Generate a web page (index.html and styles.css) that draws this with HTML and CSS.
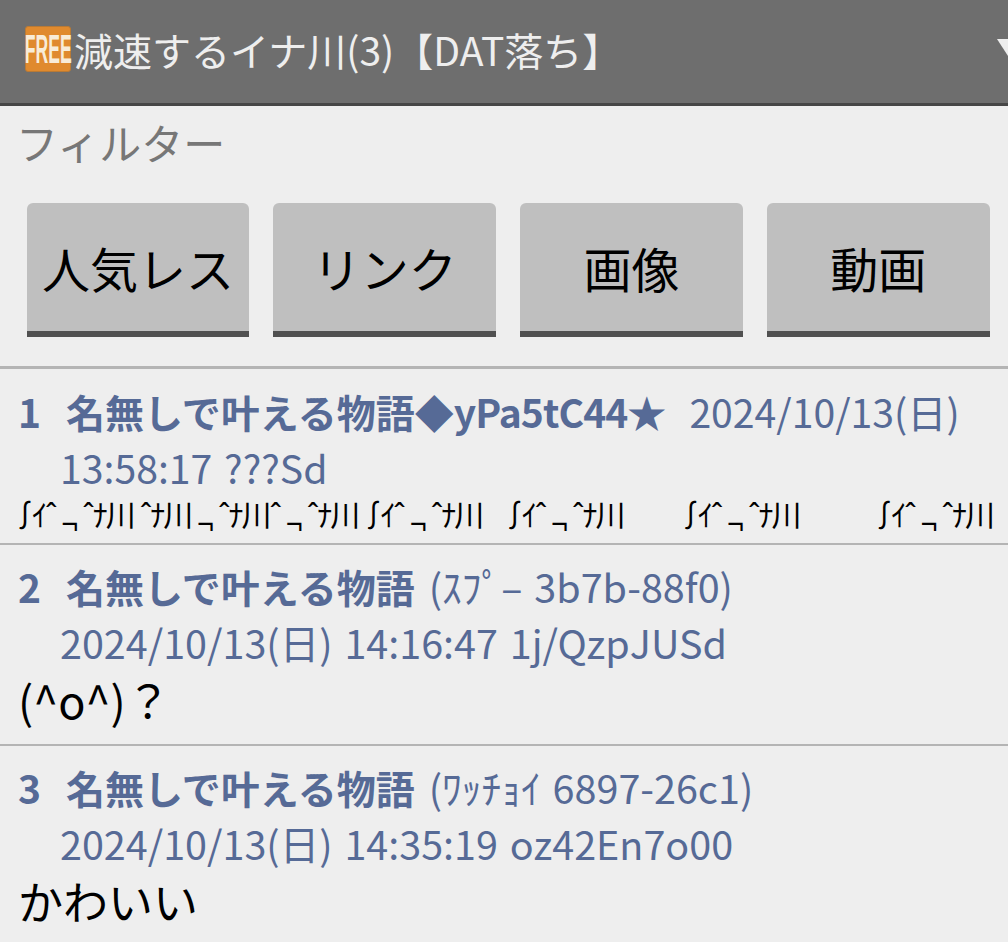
FILE: index.html
```html
<!DOCTYPE html>
<html lang="ja">
<head>
  <meta charset="UTF-8">
  <meta name="viewport" content="width=device-width, initial-scale=1.0">
  <title>減速するイナ川(3)</title>
  <link rel="stylesheet" href="styles.css">
</head>
<body>
  <header class="title-bar">
    <span class="free-badge"><span class="free-text">FREE</span></span>
    <span class="title-text">減速するイナ川(3)【DAT落ち】</span>
    <span class="title-arrow"></span>
  </header>

  <section class="filter">
    <div class="filter-label">フィルター</div>
    <div class="filter-buttons">
      <button class="filter-button">人気レス</button>
      <button class="filter-button">リンク</button>
      <button class="filter-button">画像</button>
      <button class="filter-button">動画</button>
    </div>
  </section>

  <article class="post post-first">
    <div class="post-head"><span class="post-num">1</span><span class="post-name">名無しで叶える物語◆<span class="post-trip">yPa5tC44</span>★</span><span class="post-meta post-meta-inline">2024/10/13(日)</span></div>
    <div class="post-meta post-sub post-sub-first">13:58:17 ???Sd</div>
    <div class="post-aa"><span class="aa-int">∫</span>ｲˆ <span class="aa-tick">¬</span> ˆﾅ川 ˆﾅ川 <span class="aa-tick">¬</span> ˆﾅ川ˆ <span class="aa-tick">¬</span> ˆﾅ川<span class="aa-int">∫</span>ｲˆ <span class="aa-tick">¬</span> ˆﾅ川   <span class="aa-int">∫</span>ｲˆ <span class="aa-tick">¬</span> ˆﾅ川         <span class="aa-int">∫</span>ｲˆ <span class="aa-tick">¬</span> ˆﾅ川            <span class="aa-int">∫</span>ｲˆ <span class="aa-tick">¬</span> ˆﾅ川</div>
  </article>

  <article class="post">
    <div class="post-head"><span class="post-num">2</span><span class="post-name">名無しで叶える物語</span><span class="post-meta post-id">(ｽﾌﾟ– 3b7b-88f0)</span></div>
    <div class="post-meta post-sub">2024/10/13(日) 14:16:47 1j/QzpJUSd</div>
    <div class="post-body">(^o^)？</div>
  </article>

  <article class="post post-last">
    <div class="post-head"><span class="post-num">3</span><span class="post-name">名無しで叶える物語</span><span class="post-meta post-id">(ﾜｯﾁｮｲ 6897-26c1)</span></div>
    <div class="post-meta post-sub">2024/10/13(日) 14:35:19 oz42En7o00</div>
    <div class="post-body">かわいい</div>
  </article>
</body>
</html>
```

FILE: styles.css
```css
html, body {
  height: 100%;
}

body {
  margin: 0;
  overflow: hidden;
  background-color: #eeeeee;
  font-family: "Noto Sans CJK JP", "Noto Sans", sans-serif;
  color: #000;
}

.title-bar {
  display: flex;
  align-items: center;
  box-sizing: border-box;
  height: 106px;
  padding: 0 0 6px 25px;
  background-color: #6e6e6e;
  border-bottom: 3px solid #464646;
  color: #eeeeee;
  overflow: hidden;
}

.free-badge {
  display: flex;
  align-items: center;
  justify-content: center;
  flex-shrink: 0;
  box-sizing: border-box;
  width: 46px;
  height: 46px;
  border: 1px solid #b97a35;
  border-radius: 3px;
  background-color: #e08a2e;
}

.free-text {
  color: #f8ecd8;
  font-family: "Liberation Sans", sans-serif;
  font-weight: bold;
  font-size: 40px;
  line-height: 1;
  transform: scaleX(0.44);
}

.title-text {
  flex: 1;
  margin-left: 3px;
  font-size: 39px;
  white-space: nowrap;
}

.title-arrow {
  flex-shrink: 0;
  width: 0;
  height: 0;
  margin-bottom: 3px;
  border-top: 17px solid #eeeeee;
  border-left: 11px solid transparent;
}

.filter {
  height: 263px;
  box-sizing: border-box;
  padding-top: 11px;
  border-bottom: 3px solid #b4b4b4;
}

.filter-label {
  padding-left: 16px;
  font-size: 42px;
  line-height: 50px;
  color: #777777;
}

.filter-buttons {
  display: grid;
  grid-template-columns: repeat(4, 222.6px);
  gap: 24.2px;
  margin-top: 36px;
  padding-left: 26.6px;
}

.filter-button {
  height: 134px;
  padding: 0;
  border: none;
  border-bottom: 6px solid #505050;
  border-radius: 6px 6px 0 0;
  background-color: #bfbfbf;
  color: #000;
  font-family: inherit;
  font-size: 48px;
}

.post {
  box-sizing: border-box;
  height: 201px;
  padding: 13px 0 0 18px;
  border-bottom: 2px solid #b4b4b4;
  white-space: nowrap;
  overflow: hidden;
}

.post-first {
  height: 176px;
  padding-top: 14px;
}

.post-last {
  border-bottom: none;
}

.post-head {
  display: flex;
  align-items: baseline;
  height: 56px;
  line-height: 56px;
}

.post-num {
  width: 48px;
  font-size: 39px;
  font-weight: bold;
  color: #566a96;
}

.post-name {
  font-size: 39px;
  font-weight: bold;
  color: #566a96;
}

.post-trip {
  letter-spacing: -0.9px;
}

.post-meta {
  font-size: 39.5px;
  word-spacing: 3px;
  color: #566a96;
}

.post-meta-inline {
  margin-left: 23px;
  font-size: 39.2px;
}

.post-id {
  margin-left: 14px;
}

.post-sub {
  height: 56px;
  line-height: 56px;
  padding-left: 42px;
}

.post-sub-first {
  font-size: 39.2px;
}

.post-aa {
  margin-left: -8px;
  font-family: "Noto Sans", "Noto Sans CJK JP", sans-serif;
  font-size: 30px;
  letter-spacing: -2px;
  line-height: 40px;
  white-space: pre;
}

.aa-int {
  letter-spacing: -8px;
}

.aa-tick {
  position: relative;
  top: 9px;
}

.post-body {
  font-size: 45px;
  line-height: 60px;
}
```
